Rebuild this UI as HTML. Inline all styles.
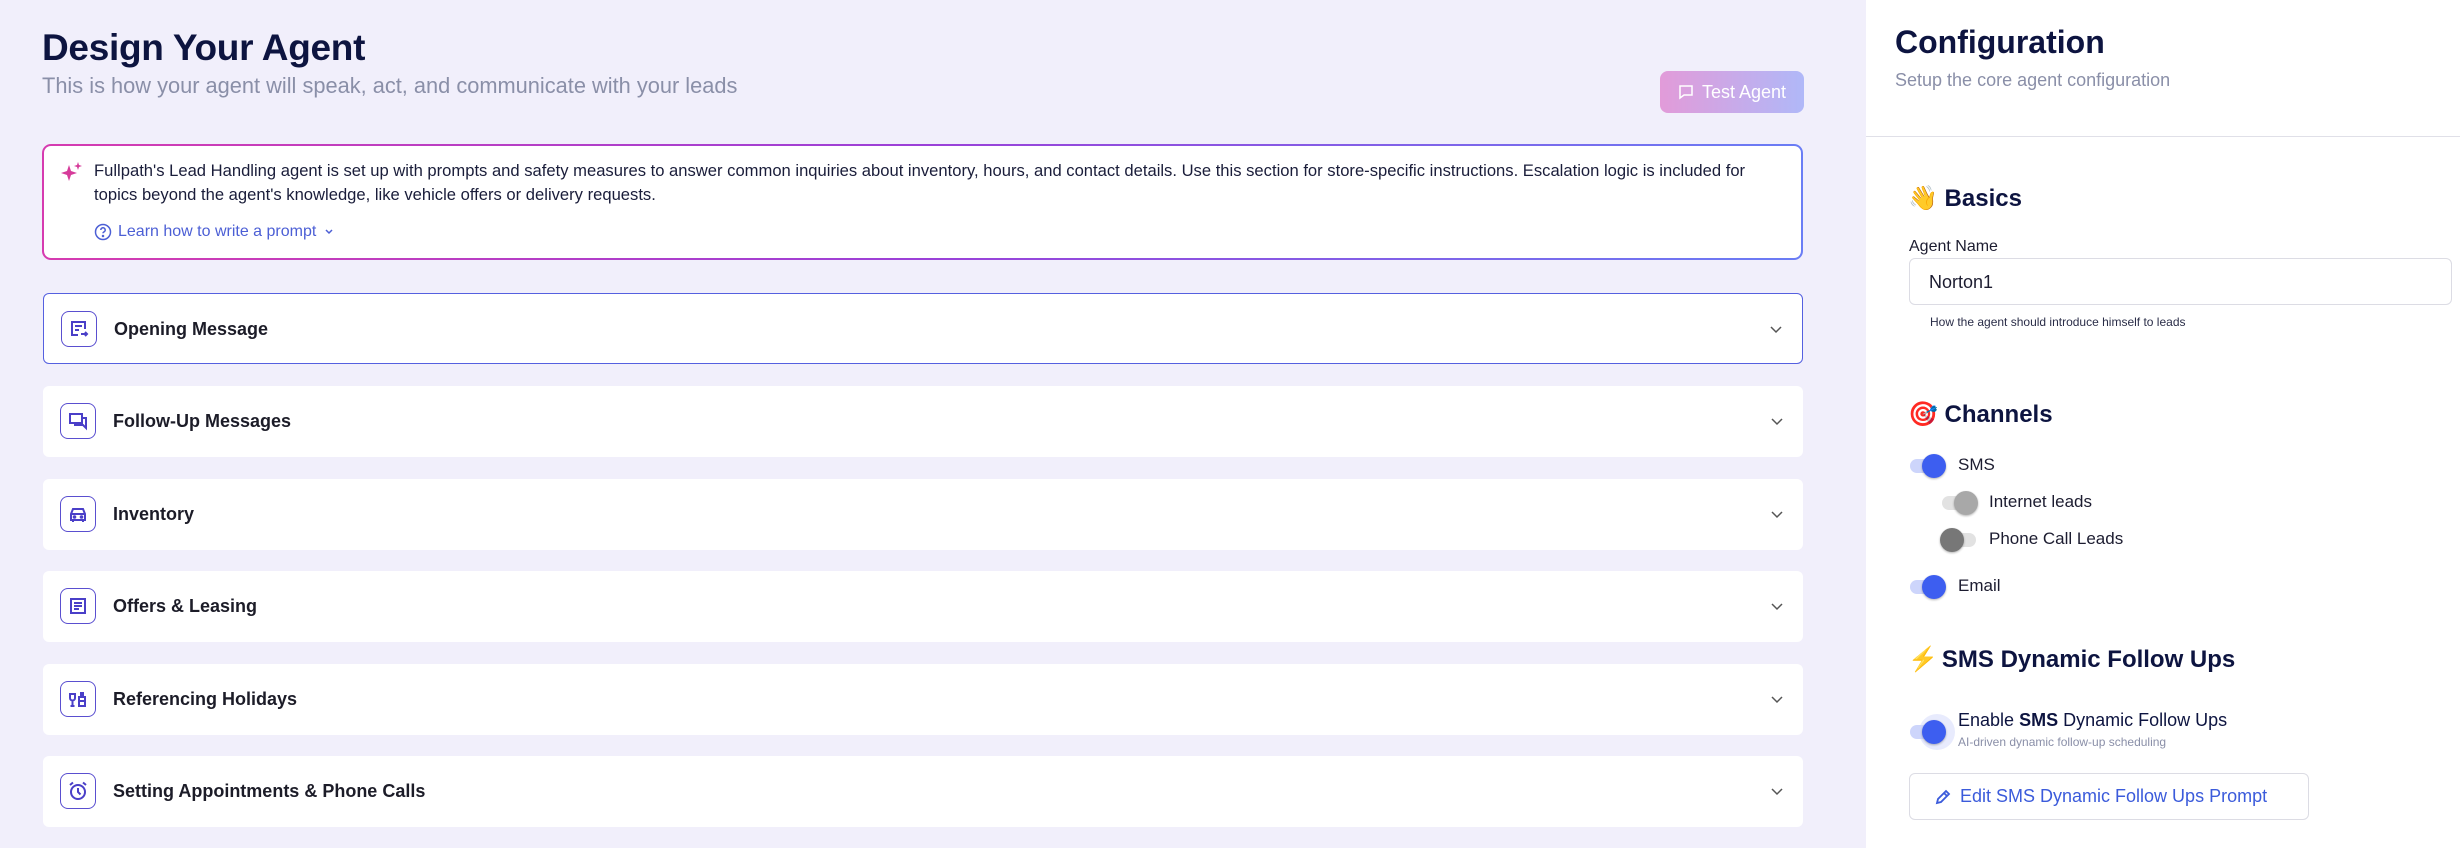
<!DOCTYPE html>
<html><head><meta charset="utf-8"><style>
*{box-sizing:border-box;margin:0;padding:0}
body{width:2460px;height:848px;overflow:hidden;font-family:"Liberation Sans",sans-serif;background:#f1effb;position:relative}
.abs{position:absolute}
.left{position:absolute;left:0;top:0;width:1866px;height:848px;background:#f1effb}
.right{position:absolute;left:1866px;top:0;width:594px;height:848px;background:#fff}
h1{position:absolute;left:42px;top:27px;font-size:37px;font-weight:bold;color:#0d1440;letter-spacing:-0.3px}
.sub{position:absolute;left:42px;top:73px;font-size:21.8px;color:#8a8fa8}
.test{position:absolute;left:1660px;top:71px;width:144px;height:42px;border-radius:8px;background:linear-gradient(90deg,#e29bd9,#b0b8f8);color:#fff;font-size:18px;display:flex;align-items:center;justify-content:center;gap:8px}
.info{position:absolute;left:42px;top:144px;width:1761px;height:116px;border-radius:9px;padding:2px;background:linear-gradient(90deg,#d63bb0,#9b40d8,#6a7df5)}
.info .in{background:#fff;border-radius:7px;width:100%;height:100%;position:relative}
.info p{position:absolute;left:50px;top:13px;width:1680px;font-size:16.6px;line-height:24px;color:#1a1d3a}
.learn{position:absolute;left:50px;top:77px;font-size:16px;color:#4c5fd5;display:flex;align-items:center;gap:6px}
.item{position:absolute;left:43px;width:1760px;height:71px;background:#fff;border-radius:6px}
.item.sel{border:1.5px solid #5560e0}
.ic{position:absolute;left:17px;top:17px;width:36px;height:36px;border:1.5px solid #5a4fd0;border-radius:8px;display:flex;align-items:center;justify-content:center}
.item .t{position:absolute;left:70px;top:25px;font-size:18px;font-weight:bold;color:#1c1c28}
.chev{position:absolute;right:18px;top:29px}
.conf{position:absolute;left:29px;top:24px;font-size:32px;font-weight:bold;color:#0d1440}
.csub{position:absolute;left:29px;top:70px;font-size:18px;color:#8a8fa8}
.hr{position:absolute;left:0;top:136px;width:594px;height:1px;background:#e0e0e8}
.h2{position:absolute;left:42px;font-size:24px;font-weight:bold;color:#0d1440;display:flex;align-items:center;gap:4px}
.tog{position:absolute;width:34px;height:14px;border-radius:7px;background:#cdd5fb}
.tog i{position:absolute;top:-5px;width:24px;height:24px;border-radius:50%;background:#3d5ef0;box-shadow:0 1px 2px rgba(0,0,0,.3)}
.lbl{position:absolute;font-size:17px;color:#1c1c30}
</style></head><body>
<div class="left">
<h1>Design Your Agent</h1>
<div class="sub">This is how your agent will speak, act, and communicate with your leads</div>
<div class="test"><svg width="16" height="16" viewBox="0 0 16 16" fill="none" stroke="#fff" stroke-width="1.5"><path d="M2 2h12v9H6l-4 3z"/></svg>Test Agent</div>
<div class="info"><div class="in">
<svg class="abs" style="left:16px;top:16px" width="24" height="22" viewBox="0 0 24 22"><path d="M9 3 L11 9 L17 11 L11 13 L9 19 L7 13 L1 11 L7 9Z" fill="#d63b9a"/><path d="M18 0 L19 3 L22 4 L19 5 L18 8 L17 5 L14 4 L17 3Z" fill="#d63b9a"/></svg>
<p>Fullpath's Lead Handling agent is set up with prompts and safety measures to answer common inquiries about inventory, hours, and contact details. Use this section for store-specific instructions. Escalation logic is included for<br>topics beyond the agent's knowledge, like vehicle offers or delivery requests.</p>
<div class="learn"><svg width="18" height="18" viewBox="0 0 18 18" fill="none" stroke="#4c5fd5" stroke-width="1.5"><circle cx="9" cy="9" r="7.5"/><path d="M6.8 7a2.2 2.2 0 1 1 3 2c-.6.3-.8.7-.8 1.3"/><circle cx="9" cy="13" r=".5" fill="#4c5fd5"/></svg>Learn how to write a prompt <svg width="14" height="14" viewBox="0 0 14 14" fill="none" stroke="#4c5fd5" stroke-width="1.5"><path d="M4 5l3 3 3-3"/></svg></div>
</div></div>

<div class="item sel" style="top:293px"><div class="ic"><svg width="22" height="22" viewBox="0 0 22 22" fill="none" stroke="#4a3fc8" stroke-width="2"><path d="M10 17H4V4h13v7M7 8h7M7 12h4M13 16h6M17 14l2 2-2 2"/></svg></div><div class="t">Opening Message</div><svg class="chev" width="16" height="14" viewBox="0 0 16 14" fill="none" stroke="#555" stroke-width="1.5"><path d="M3 4l5 5 5-5"/></svg></div>
<div class="item" style="top:386px"><div class="ic"><svg width="22" height="22" viewBox="0 0 22 22" fill="none" stroke="#4a3fc8" stroke-width="2"><path d="M3 4h12v9H3zM15 8h4v10l-3-3H8v-2"/></svg></div><div class="t">Follow-Up Messages</div><svg class="chev" width="16" height="14" viewBox="0 0 16 14" fill="none" stroke="#555" stroke-width="1.5"><path d="M3 4l5 5 5-5"/></svg></div>
<div class="item" style="top:479px"><div class="ic"><svg width="22" height="22" viewBox="0 0 22 22" fill="none" stroke="#4a3fc8" stroke-width="2"><path d="M6 6h10l2 5v6H4v-6zM4 11h14M6 17v2M16 17v2"/><circle cx="7.5" cy="14" r=".8" fill="#4a3fc8"/><circle cx="14.5" cy="14" r=".8" fill="#4a3fc8"/></svg></div><div class="t">Inventory</div><svg class="chev" width="16" height="14" viewBox="0 0 16 14" fill="none" stroke="#555" stroke-width="1.5"><path d="M3 4l5 5 5-5"/></svg></div>
<div class="item" style="top:571px"><div class="ic"><svg width="22" height="22" viewBox="0 0 22 22" fill="none" stroke="#4a3fc8" stroke-width="2"><path d="M4 4h14v14H4zM7 8h8M7 11h8M7 14h5"/></svg></div><div class="t">Offers &amp; Leasing</div><svg class="chev" width="16" height="14" viewBox="0 0 16 14" fill="none" stroke="#555" stroke-width="1.5"><path d="M3 4l5 5 5-5"/></svg></div>
<div class="item" style="top:664px"><div class="ic"><svg width="22" height="22" viewBox="0 0 22 22" fill="none" stroke="#4a3fc8" stroke-width="2"><path d="M3 6h5v4a2.5 2.5 0 0 1-5 0zM5.5 12.5V18M3.5 18h4M12 9h6v9h-6zM14 9V5h2v4M12 13h6"/></svg></div><div class="t">Referencing Holidays</div><svg class="chev" width="16" height="14" viewBox="0 0 16 14" fill="none" stroke="#555" stroke-width="1.5"><path d="M3 4l5 5 5-5"/></svg></div>
<div class="item" style="top:756px"><div class="ic"><svg width="22" height="22" viewBox="0 0 22 22" fill="none" stroke="#4a3fc8" stroke-width="2"><circle cx="11" cy="12" r="7"/><path d="M11 8v4l2.5 2.5M3 5l3-2.5M19 5l-3-2.5"/></svg></div><div class="t">Setting Appointments &amp; Phone Calls</div><svg class="chev" width="16" height="14" viewBox="0 0 16 14" fill="none" stroke="#555" stroke-width="1.5"><path d="M3 4l5 5 5-5"/></svg></div>
</div>

<div class="right">
<div class="conf">Configuration</div>
<div class="csub">Setup the core agent configuration</div>
<div class="hr"></div>
<div class="h2" style="top:184px">👋 Basics</div>
<div class="abs" style="left:43px;top:238px;font-size:16px;color:#1c1c30">Agent Name</div>
<div class="abs" style="left:43px;top:258px;width:543px;height:47px;border:1px solid #dcdce4;border-radius:6px;font-size:18px;color:#1c1c30;padding:13px 0 0 19px">Norton1</div>
<div class="abs" style="left:64px;top:315px;font-size:12px;color:#2a2d48">How the agent should introduce himself to leads</div>
<div class="h2" style="top:400px">🎯 Channels</div>
<div class="tog" style="left:44px;top:459px"><i style="left:12px"></i></div><div class="lbl" style="left:92px;top:455px">SMS</div>
<div class="tog" style="left:76px;top:496px;background:#e2e2e2"><i style="left:12px;background:#a8a8a8"></i></div><div class="lbl" style="left:123px;top:492px">Internet leads</div>
<div class="tog" style="left:76px;top:533px;background:#e2e2e2"><i style="left:-2px;background:#777"></i></div><div class="lbl" style="left:123px;top:529px">Phone Call Leads</div>
<div class="tog" style="left:44px;top:580px"><i style="left:12px"></i></div><div class="lbl" style="left:92px;top:576px">Email</div>
<div class="h2" style="top:645px"><span style="color:#f5a623">⚡</span> SMS Dynamic Follow Ups</div>
<div class="abs" style="left:53px;top:714px;width:36px;height:36px;border-radius:50%;background:#e8ebfd"></div>
<div class="tog" style="left:44px;top:725px"><i style="left:12px"></i></div>
<div class="lbl" style="left:92px;top:710px;font-size:18px;color:#0d1440">Enable <b>SMS</b> Dynamic Follow Ups</div>
<div class="abs" style="left:92px;top:735px;font-size:12px;color:#8a8fa8">AI-driven dynamic follow-up scheduling</div>
<div class="abs" style="left:43px;top:773px;width:400px;height:47px;border:1px solid #dcdce4;border-radius:6px;display:flex;align-items:center;padding-left:24px;gap:8px;font-size:18px;color:#3b5bdb;white-space:nowrap"><svg width="18" height="18" viewBox="0 0 18 18" fill="none" stroke="#3b5bdb" stroke-width="1.8"><path d="M3 15l1-4 8-8 3 3-8 8zM10 5l3 3"/></svg>Edit SMS Dynamic Follow Ups Prompt</div>
</div>
</body></html>
